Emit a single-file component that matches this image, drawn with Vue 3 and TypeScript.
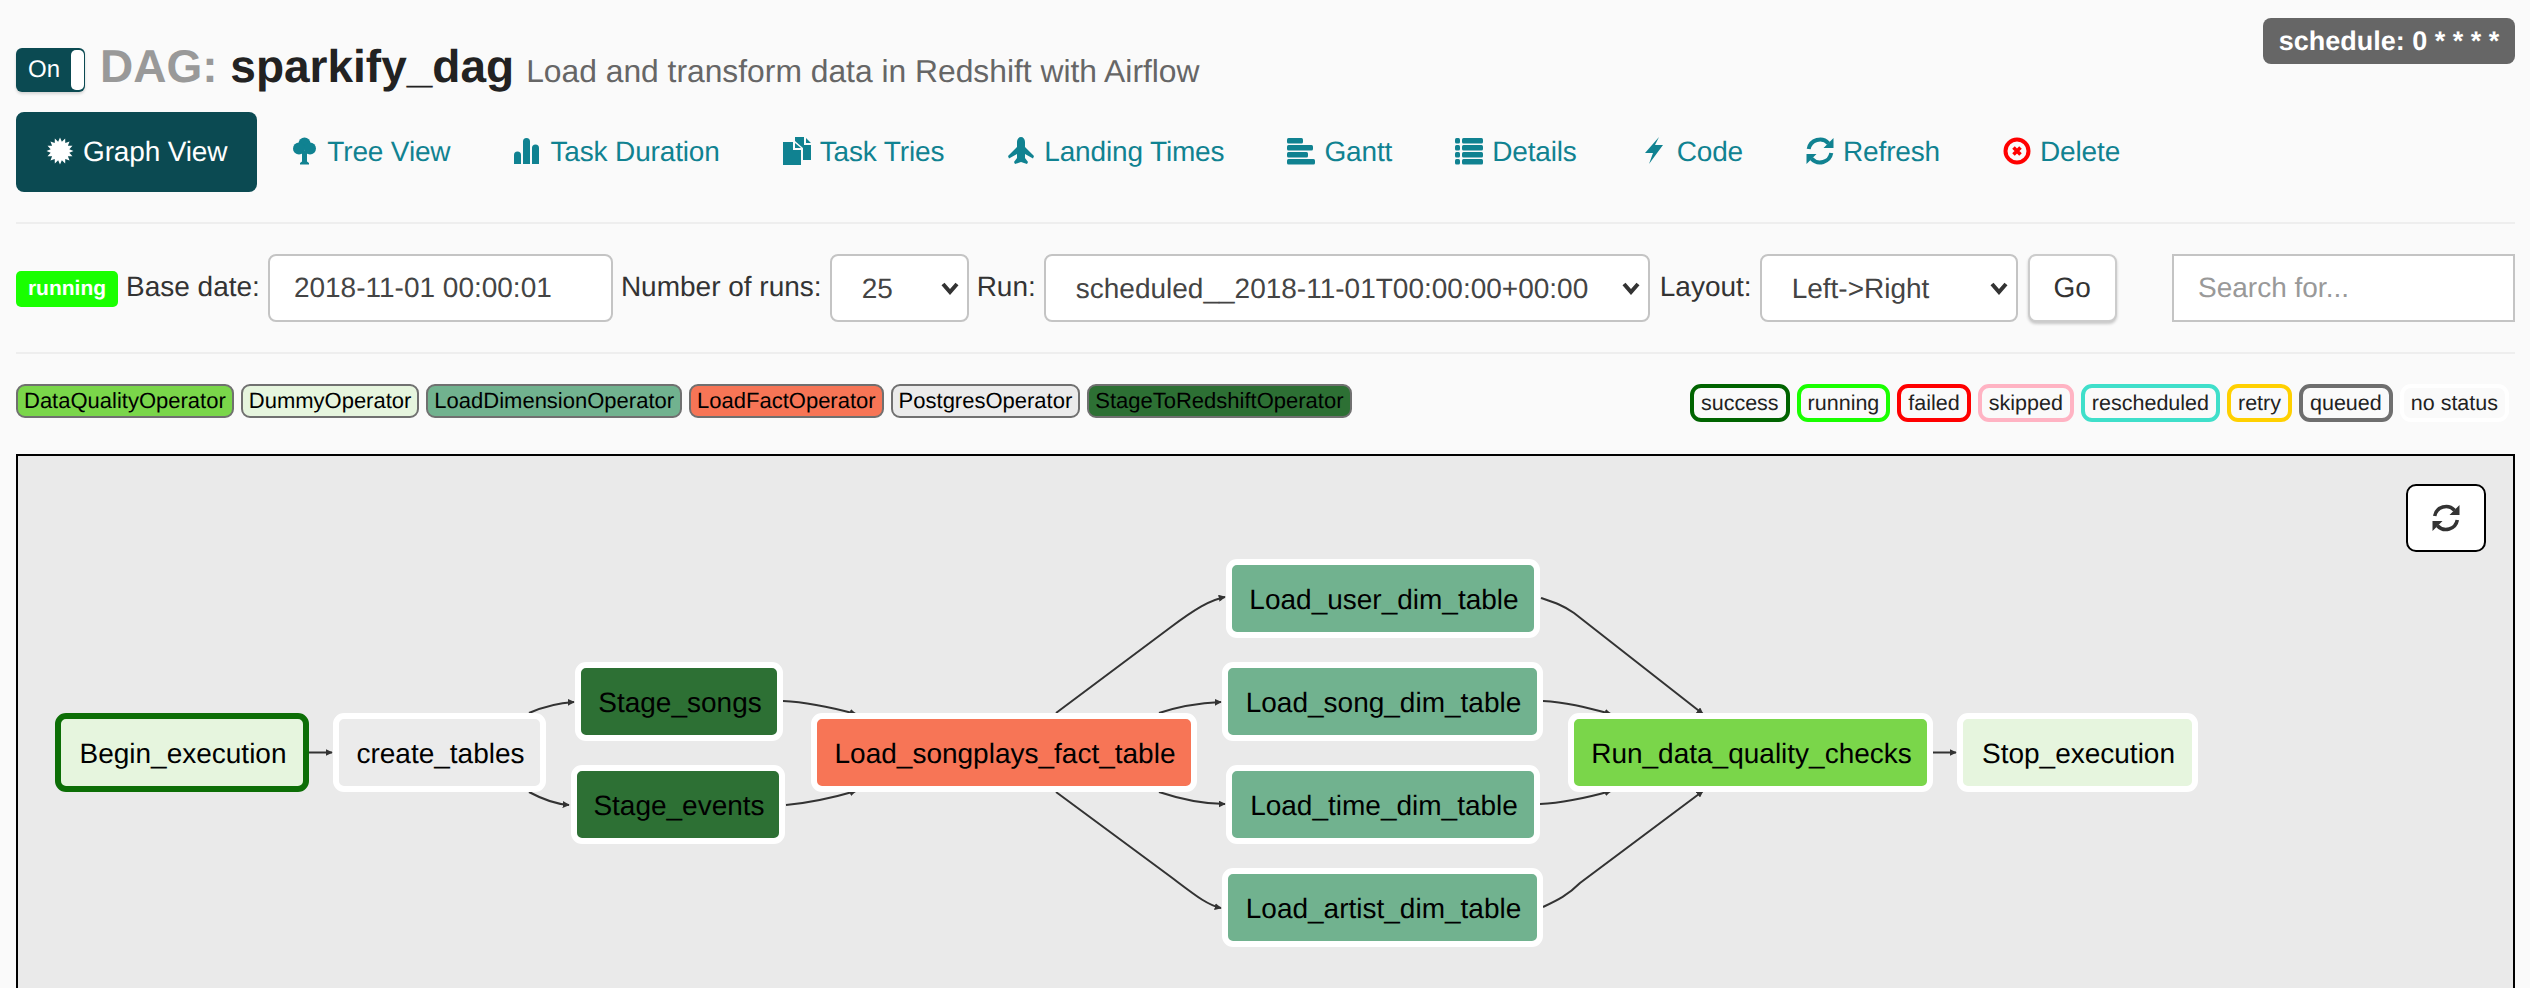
<script setup lang="ts">
type NavItem = { label: string; icon: string; active?: boolean }
type GraphNode = { id: string; x: number; y: number; w: number; fill: string; stroke?: string }

const navItems: NavItem[] = [
  { label: 'Graph View', icon: 'sun', active: true },
  { label: 'Tree View', icon: 'tree' },
  { label: 'Task Duration', icon: 'stats' },
  { label: 'Task Tries', icon: 'duplicate' },
  { label: 'Landing Times', icon: 'plane' },
  { label: 'Gantt', icon: 'gantt' },
  { label: 'Details', icon: 'list' },
  { label: 'Code', icon: 'flash' },
  { label: 'Refresh', icon: 'refresh' },
  { label: 'Delete', icon: 'remove' },
]

const operators = [
  { name: 'DataQualityOperator', color: '#7ad64a' },
  { name: 'DummyOperator', color: '#e6f5de' },
  { name: 'LoadDimensionOperator', color: '#71b28f' },
  { name: 'LoadFactOperator', color: '#f77556' },
  { name: 'PostgresOperator', color: '#ebebeb' },
  { name: 'StageToRedshiftOperator', color: '#2d7034' },
]

const states = [
  { name: 'success', color: '#006400' },
  { name: 'running', color: '#19ff00' },
  { name: 'failed', color: '#ff0000' },
  { name: 'skipped', color: '#ffb3c3' },
  { name: 'rescheduled', color: '#3fdfca' },
  { name: 'retry', color: '#ffd000' },
  { name: 'queued', color: '#6e6e6e' },
  { name: 'no status', color: '#ffffff' },
]

const nodes: GraphNode[] = [
  { id: 'Begin_execution', x: 55, y: 713, w: 254, fill: '#e6f5de', stroke: '#0c6e06' },
  { id: 'create_tables', x: 333, y: 713, w: 213, fill: '#ebebeb' },
  { id: 'Stage_songs', x: 575, y: 662, w: 208, fill: '#2d7034' },
  { id: 'Stage_events', x: 571, y: 765, w: 214, fill: '#2d7034' },
  { id: 'Load_songplays_fact_table', x: 811, y: 713, w: 386, fill: '#f77556' },
  { id: 'Load_user_dim_table', x: 1226, y: 559, w: 314, fill: '#71b28f' },
  { id: 'Load_song_dim_table', x: 1222, y: 662, w: 321, fill: '#71b28f' },
  { id: 'Load_time_dim_table', x: 1226, y: 765, w: 314, fill: '#71b28f' },
  { id: 'Load_artist_dim_table', x: 1222, y: 868, w: 321, fill: '#71b28f' },
  { id: 'Run_data_quality_checks', x: 1568, y: 713, w: 365, fill: '#7ad64a' },
  { id: 'Stop_execution', x: 1957, y: 713, w: 241, fill: '#e6f5de' },
]

const nodeHeight = 79

// page coordinates of the edges, the svg starts at the canvas corner
const canvasX = 18
const canvasY = 456

const edges = [
  'M309 752.500 L332 752.500',
  'M529 713 C545 706 558 703 574 702',
  'M529 792 C542 799 555 804 569 805',
  'M783 701 C805 702 830 707 856 714',
  'M786 805 C808 803 832 798 856 791',
  'M1056 713 L1171 627 C1195 609 1210 600 1225 597',
  'M1159 713 C1180 706 1200 703 1221 702',
  'M1159 792 C1180 799 1205 804 1225 804',
  'M1056 792 L1171 877 C1195 895 1207 905 1221 908',
  'M1541 598 C1553 602 1563 605 1574 613 L1703 714',
  'M1543 701 C1565 702 1585 707 1611 714',
  'M1540 804 C1562 803 1586 798 1611 791',
  'M1543 907 C1558 900 1568 895 1580 883 L1703 791',
  'M1933 752.500 L1956 752.500',
]

// 16 tooth burst for the Graph View icon
const sunPoints = Array.from({ length: 32 }, (_, i) => {
  const r = i % 2 === 0 ? 13.5 : 9.5
  const a = (i * Math.PI) / 16
  return `${(14 + r * Math.sin(a)).toFixed(2)},${(14 - r * Math.cos(a)).toFixed(2)}`
}).join(' ')
</script>

<template>
  <div class="page">
    <div class="schedule">schedule: 0 * * * *</div>

    <div class="title-row">
      <div class="toggle"><span class="toggle-on">On</span><span class="toggle-handle"></span></div>
      <h1 class="title">
        <span class="dag-label">DAG:</span> <span class="dag-name">sparkify_dag</span>
        <small class="dag-desc">Load and transform data in Redshift with Airflow</small>
      </h1>
    </div>

    <ul class="nav">
      <li v-for="item in navItems" :key="item.label" class="nav-item" :class="{ active: item.active }">
        <svg class="nav-icon" viewBox="0 0 28 28" aria-hidden="true">
          <polygon v-if="item.icon === 'sun'" fill="currentColor" :points="sunPoints" />
          <g v-else-if="item.icon === 'tree'" fill="currentColor">
            <circle cx="14.500" cy="6.500" r="6" />
            <circle cx="9" cy="11.500" r="6" />
            <circle cx="20" cy="11.500" r="6" />
            <path d="M12 14h5v10.500l2 1.500v1.500H10V26l2-1.500z" />
          </g>
          <path v-else-if="item.icon === 'stats'" fill="currentColor" d="M1 18a3.500 3.500 0 0 1 7 0v9H1zM10 4.500a3.500 3.500 0 0 1 7 0V27h-7zM19 11a3.500 3.500 0 0 1 7 0v16h-7z" />
          <path v-else-if="item.icon === 'duplicate'" fill="currentColor" d="M0 5h10v8h8v15H0zM12 6l6 5h-6zM12 0h9v8h7v15h-8V11l-8-7zM23 1l5 5h-5z" />
          <path v-else-if="item.icon === 'plane'" fill="currentColor" d="M14 0c2.200 0 4 2 4 5v5l9 9-1 2.500-8-4.500v4l3 4-1 2-6-2-6 2-1-2 3-4v-4l-8 4.500-1-2.500 9-9V5c0-3 1.800-5 4-5z" />
          <g v-else-if="item.icon === 'gantt'" fill="currentColor">
            <rect x="0" y="1" width="16" height="5.500" rx="1.500" />
            <rect x="0" y="8" width="26" height="5.500" rx="1.500" />
            <rect x="0" y="15" width="21" height="5.500" rx="1.500" />
            <rect x="0" y="22" width="28" height="5.500" rx="1.500" />
          </g>
          <g v-else-if="item.icon === 'list'" fill="currentColor">
            <template v-for="y in [1, 8, 15, 22]" :key="y">
              <rect x="0" :y="y" width="5" height="5.500" rx="1.500" />
              <rect x="7" :y="y" width="21" height="5.500" rx="1.500" />
            </template>
          </g>
          <polygon v-else-if="item.icon === 'flash'" fill="currentColor" points="19,0 5,16 13,16 9,27 23,8 15,8" />
          <g v-else-if="item.icon === 'refresh'">
            <path fill="none" stroke="currentColor" stroke-width="4" d="M2.700 12A11.500 11.500 0 0 1 22.500 6.300M25.300 16A11.500 11.500 0 0 1 5.500 21.700" />
            <path fill="currentColor" d="M27.500 1v10h-10zM.5 27V17h10z" />
          </g>
          <g v-else>
            <circle cx="14" cy="14" r="11.500" fill="none" stroke="#f00" stroke-width="4" />
            <path fill="none" stroke="#f00" stroke-width="3.600" d="M10.500 10.500l7 7M17.500 10.500l-7 7" />
          </g>
        </svg>
        <span>{{ item.label }}</span>
      </li>
    </ul>

    <hr class="rule rule-first" />

    <form class="controls" @submit.prevent>
      <div class="controls-left">
        <span class="state-badge">running</span>
        <label>Base date:</label>
        <input class="field date-field" value="2018-11-01 00:00:01" />
        <label>Number of runs:</label>
        <select class="field runs-field"><option>25</option></select>
        <label>Run:</label>
        <select class="field run-field"><option>scheduled__2018-11-01T00:00:00+00:00</option></select>
        <label class="layout-label">Layout:</label>
        <select class="field layout-field"><option>Left-&gt;Right</option></select>
        <button class="go-btn" type="submit">Go</button>
      </div>
      <input class="search" placeholder="Search for..." />
    </form>

    <hr class="rule" />

    <div class="legends">
      <div class="legend-group">
        <span v-for="op in operators" :key="op.name" class="op-chip" :style="{ backgroundColor: op.color }">{{ op.name }}</span>
      </div>
      <div class="legend-group state-group">
        <span v-for="st in states" :key="st.name" class="state-chip" :style="{ borderColor: st.color }">{{ st.name }}</span>
      </div>
    </div>

    <div class="graph">
      <button class="graph-refresh" type="button" aria-label="Refresh">
        <svg viewBox="0 0 28 28" width="28" height="28" aria-hidden="true">
          <path fill="none" stroke="#333" stroke-width="3.600" d="M2.700 12A11.500 11.500 0 0 1 22.500 6.300M25.300 16A11.500 11.500 0 0 1 5.500 21.700" />
          <path fill="#333" d="M27.500 1v10h-10zM.5 27V17h10z" />
        </svg>
      </button>
      <svg class="graph-svg" width="2495" height="530">
        <defs>
          <marker id="arrow" viewBox="0 0 10 10" refX="9" refY="5" markerWidth="7" markerHeight="7" markerUnits="userSpaceOnUse" orient="auto">
            <path d="M0 0L10 5L0 10z" fill="#333" />
          </marker>
        </defs>
        <g :transform="`translate(${-canvasX} ${-canvasY})`">
          <path v-for="(d, i) in edges" :key="i" :d="d" class="edge" marker-end="url(#arrow)" />
          <g v-for="n in nodes" :key="n.id">
            <rect
              :x="n.x + 3"
              :y="n.y + 3"
              :width="n.w - 6"
              :height="nodeHeight - 6"
              rx="8"
              :fill="n.fill"
              :stroke="n.stroke || '#fff'"
              stroke-width="6"
            />
            <text :x="n.x + n.w / 2 + 1" :y="n.y + nodeHeight / 2 + 10" class="node-label">{{ n.id }}</text>
          </g>
        </g>
      </svg>
    </div>
  </div>
</template>

<style>
html,
body {
  margin: 0;
  background: #fafafa;
  overflow: hidden;
}
</style>

<style scoped>
.page {
  position: relative;
  height: 988px;
  box-sizing: border-box;
  padding: 48px 15px 0 16px;
  overflow: hidden;
  background: #fafafa;
  color: #333;
  font-family: "Liberation Sans", Arial, sans-serif;
  font-size: 28px;
  text-rendering: geometricPrecision;
}

.schedule {
  position: absolute;
  top: 18px;
  right: 15px;
  width: 252px;
  height: 46px;
  box-sizing: border-box;
  border-radius: 8px;
  background: #666;
  color: #fff;
  font-size: 27px;
  font-weight: 700;
  line-height: 46px;
  text-align: center;
}

.title-row {
  display: flex;
  align-items: flex-start;
  height: 44px;
}

.toggle {
  display: flex;
  width: 69px;
  height: 44px;
  box-sizing: border-box;
  flex: none;
  align-items: stretch;
  justify-content: space-between;
  padding: 2px 1px 2px 0;
  border-radius: 6px;
  background: #0b4a52;
  box-shadow: 0 2px 3px rgba(0, 0, 0, 0.15);
}

.toggle-on {
  color: #fff;
  font-size: 24px;
  line-height: 40px;
  padding-left: 12px;
}

.toggle-handle {
  width: 13px;
  border-radius: 5px;
  background: #fff;
}

.title {
  margin: -4px 0 0 15px;
  font-size: 46px;
  font-weight: 700;
  line-height: 44px;
  white-space: nowrap;
}

.dag-label {
  color: #999;
}

.dag-name {
  color: #222;
}

.dag-desc {
  margin-left: 12px;
  color: #666;
  font-size: 31.8px;
  font-weight: 400;
}

.nav {
  display: flex;
  margin: 20px 0 0;
  padding: 0;
  list-style: none;
}

.nav-item {
  display: flex;
  height: 80px;
  box-sizing: border-box;
  align-items: center;
  gap: 9px;
  padding: 0 30px;
  margin-right: 3px;
  border-radius: 8px;
  color: #108291;
  font-size: 28px;
  letter-spacing: -0.15px;
  white-space: nowrap;
}

.nav-item.active {
  background: #0b4a52;
  color: #fff;
}

.nav-icon {
  width: 28px;
  height: 28px;
  margin-top: -2px;
  flex: none;
}

.rule {
  height: 2px;
  margin: 0;
  border: 0;
  background: #eee;
}

.rule-first {
  margin-top: 30px;
}

.controls {
  display: flex;
  align-items: center;
  justify-content: space-between;
  height: 68px;
  margin: 30px 0;
}

.controls-left {
  display: flex;
  align-items: center;
  gap: 8px;
}

.controls label {
  margin-top: -2px;
  color: #333;
  font-size: 28px;
}

.state-badge {
  display: inline-block;
  width: 102px;
  height: 36px;
  margin-top: 1px;
  border-radius: 5px;
  background: #19ff00;
  color: #fff;
  font-size: 21px;
  font-weight: 700;
  line-height: 36px;
  text-align: center;
}

.field {
  height: 68px;
  box-sizing: border-box;
  border: 2px solid #c4c4c4;
  border-radius: 8px;
  background-color: #fff;
  color: #444;
  font-family: "Liberation Sans", Arial, sans-serif;
  font-size: 28px;
  padding: 0 24px;
  text-rendering: geometricPrecision;
}

select.field {
  padding-left: 30px;
  appearance: none;
  background-image: url("data:image/svg+xml,%3Csvg xmlns='http://www.w3.org/2000/svg' viewBox='0 0 20 14'%3E%3Cpath d='M3 3l7 8 7-8' fill='none' stroke='%23333' stroke-width='4'/%3E%3C/svg%3E");
  background-repeat: no-repeat;
  background-position: right 7px center;
  background-size: 20px 14px;
}

.date-field {
  width: 345px;
}

.runs-field {
  width: 139px;
}

.run-field {
  width: 606px;
}

.layout-label {
  margin-left: 2px;
}

.layout-field {
  width: 258px;
}

.go-btn {
  width: 89px;
  height: 68px;
  margin-left: 2px;
  border: 2px solid #ccc;
  border-radius: 8px;
  background: #fff;
  box-shadow: 0 2px 3px rgba(0, 0, 0, 0.2);
  color: #333;
  font-family: "Liberation Sans", Arial, sans-serif;
  font-size: 28px;
  text-rendering: geometricPrecision;
}

.search {
  width: 343px;
  height: 68px;
  box-sizing: border-box;
  border: 2px solid #c4c4c4;
  background: #fff;
  font-family: "Liberation Sans", Arial, sans-serif;
  font-size: 28px;
  padding: 0 24px;
  text-rendering: geometricPrecision;
}

.search::placeholder {
  color: #999;
}

.legends {
  display: flex;
  align-items: flex-start;
  justify-content: space-between;
  height: 70px;
  margin-top: 30px;
}

.legend-group {
  display: flex;
  gap: 7px;
}

.state-group {
  padding-right: 6px;
}

.op-chip {
  height: 34px;
  box-sizing: border-box;
  padding: 0 6px;
  border: 2px solid #707070;
  border-radius: 9px;
  color: #000;
  font-size: 22px;
  line-height: 30px;
  white-space: nowrap;
}

.state-chip {
  height: 38px;
  box-sizing: border-box;
  padding: 0 7px;
  border: 4px solid;
  border-radius: 11px;
  background: #fafafa;
  color: #222;
  font-size: 21.5px;
  line-height: 30px;
  white-space: nowrap;
}

.graph {
  position: relative;
  height: 600px;
  border: 2px solid #000;
  background: #eaeaea;
}

.graph-refresh {
  position: absolute;
  top: 28px;
  right: 27px;
  display: flex;
  width: 80px;
  height: 68px;
  align-items: center;
  justify-content: center;
  padding: 0;
  border: 2px solid #000;
  border-radius: 10px;
  background: #fff;
}

.graph-svg {
  display: block;
}

.edge {
  fill: none;
  stroke: #333;
  stroke-width: 2;
}

.node-label {
  fill: #000;
  font-size: 28px;
  text-anchor: middle;
}
</style>
